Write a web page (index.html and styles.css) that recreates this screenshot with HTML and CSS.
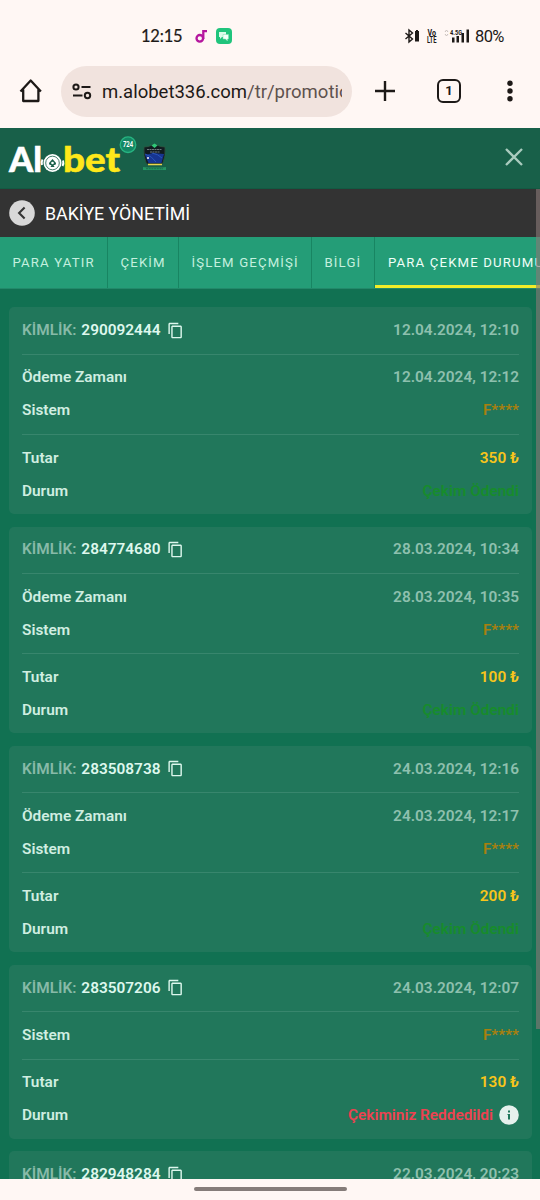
FILE: index.html
```html
<!DOCTYPE html>
<html lang="tr">
<head>
<meta charset="utf-8">
<title>Bakiye Yönetimi</title>
<link rel="stylesheet" href="styles.css">
</head>
<body>
<svg class="defs" width="0" height="0">
  <symbol id="copy" viewBox="0 0 24 24"><path d="M16 1H4C2.900 1 2 1.900 2 3v14h2V3h12V1zm3 4H8C6.900 5 6 5.900 6 7v14c0 1.100.9 2 2 2h11c1.100 0 2-.9 2-2V7c0-1.100-.9-2-2-2zm0 16H8V7h11v14z"/></symbol>
</svg>
<div class="screen">
  <div class="status">
    <span class="clock">12:15</span>
    <svg class="note" width="13" height="15" viewBox="0 0 13 15" fill="none" stroke="#b5179e" stroke-width="2.300"><circle cx="4.800" cy="9.300" r="3.300"/><path d="M8.300 10V2.200H12"/></svg>
    <svg class="chat" width="16" height="16" viewBox="0 0 16 16"><rect width="16" height="16" rx="4" fill="#20c47c"/><path d="M3 4h7v5H6l-2 2V9H3z" fill="#d9fbe9"/><path d="M7 6.500h5.500V11h-1v2l-2-2H7z" fill="#f4fff9" stroke="#7fdcb0" stroke-width=".5"/></svg>
    <span class="grow"></span>
    <svg class="bt" width="16" height="14" viewBox="0 0 16 14"><path d="M1.500 4l7 6-3.500 3V1l3.500 3-7 6" fill="none" stroke="#1d1917" stroke-width="1.400"/><path d="M11 2h1V1h2v1h1v10.500h-4z" fill="#1d1917"/></svg>
    <svg class="volte" width="10" height="15" viewBox="0 0 10 15"><text x="0.500" y="6.800" textLength="8.500" lengthAdjust="spacingAndGlyphs">Vo</text><text x="0" y="14" textLength="9.500" lengthAdjust="spacingAndGlyphs">LTE</text></svg>
    <svg class="signal" width="26" height="16" viewBox="0 0 26 16"><g fill="#1d1917"><rect x="8" y="9.500" width="2.500" height="5"/><rect x="12.500" y="8" width="2.500" height="6.500"/><rect x="17.500" y="5" width="2.500" height="9.500"/><rect x="22.500" y="1.500" width="2.500" height="13"/><text x="6" y="7" font-size="8" textLength="12" lengthAdjust="spacingAndGlyphs">4.5G</text></g><path d="M1 4l1.500-2L4 4M1 6l1.500 2L4 6" fill="none" stroke="#c8c0bc"/></svg>
    <span class="battery">80%</span>
  </div>
  <div class="browser">
    <svg class="home" width="24" height="24" viewBox="0 0 24 24" fill="none" stroke="#1d1917" stroke-width="2.300" stroke-linejoin="round"><path d="M1.500 12.500L11.700 1.500l10.200 11M4.200 10.500V22h15.200V10.500"/></svg>
    <div class="url">
      <svg width="20" height="17" viewBox="0 0 20 17" fill="none" stroke="#1d1917" stroke-width="2"><circle cx="4" cy="4" r="2.600"/><path d="M9.500 4H18.500M1 12.500h9.500"/><circle cx="15.500" cy="12.500" r="2.700"/></svg>
      <span class="address">m.alobet336.com<span class="path">/tr/promotions</span></span>
    </div>
    <svg class="plus" width="22" height="22" viewBox="0 0 22 22" stroke="#1d1917" stroke-width="2.400"><path d="M1 11h20M11 1v20"/></svg>
    <span class="tabcount">1</span>
    <svg class="more" width="6" height="22" viewBox="0 0 6 22" fill="#1d1917"><circle cx="3" cy="3.300" r="2.700"/><circle cx="3" cy="11" r="2.700"/><circle cx="3" cy="18.700" r="2.700"/></svg>
  </div>
  <header class="site">
    <svg class="logo" width="160" height="42" viewBox="0 0 160 42">
      <text class="word" x="0" y="37" fill="#fff" stroke="#fff" textLength="33" lengthAdjust="spacingAndGlyphs">Al</text>
      <text class="word" x="54" y="37" fill="#ffe81a" stroke="#ffe81a" textLength="57" lengthAdjust="spacingAndGlyphs">bet</text>
      <circle cx="43.500" cy="28" r="9" fill="#fff"/><circle cx="43.500" cy="28" r="6.800" fill="none" stroke="#186049" stroke-width=".8"/>
      <path d="M33 30q-1-3 .5-5.500M54 25.500q1 3-.5 5.500" stroke="#fff" stroke-width="2" fill="none"/>
      <path d="M43.500 24l3.500 4q.5 2.500-2.500 2l1 2h-4l1-2q-3 .5-2.500-2z" fill="#186049"/><circle cx="43.500" cy="28" r="1.300" fill="#fff"/>
      <circle cx="119" cy="9.700" r="7.800" fill="#148764" stroke="#27b582" stroke-width="1.300"/>
      <text class="badge" x="114" y="12" fill="#fff" textLength="10" lengthAdjust="spacingAndGlyphs">724</text>
      <path d="M135 12q5 0 8-2h5q3 2 8 2 1 9-2.500 17h-16Q134 21 135 12z" fill="#111b20" stroke="#315c42" stroke-width=".7"/>
      <path d="M136 20l8-2 11 1-2.500 9h-13z" fill="#173591"/><path d="M136 19q7 2 11 8M143 18q6 1 10 5" stroke="#2855b9" stroke-width="1" fill="none"/>
      <circle cx="139" cy="23" r="1" fill="#fff"/><path d="M142.500 10.500l3-2 3 2-3 2.500z" fill="#30c878"/>
      <path d="M138 14.500h15M141 17h10" stroke="#6d777c" stroke-width="1.200" stroke-dasharray="2 .5"/>
      <path d="M139 29.500h14" stroke="#e9d64e" stroke-width="1.500"/><path d="M134 32l4 .5h15l4-.5v3h-23z" fill="#249563"/><path d="M137 33.700h17" stroke="#176a48" stroke-width=".9" stroke-dasharray="2 .7"/>
    </svg>
    <svg class="close" width="18" height="18" viewBox="0 0 18 18" stroke="#a9cbbe" stroke-width="2.300"><path d="M1 1l16 16M17 1L1 17"/></svg>
  </header>
  <main class="panel">
    <div class="title">
      <svg width="26" height="26" viewBox="0 0 26 26"><circle cx="13" cy="13" r="12.800" fill="#d8d8d8"/><path d="M15.600 7.500L10.100 13l5.500 5.500" fill="none" stroke="#333" stroke-width="2.100"/></svg>
      <h1>BAKİYE YÖNETİMİ</h1>
    </div>
    <nav class="tabs">
      <span class="tab t1">PARA YATIR</span><span class="tab t2">ÇEKİM</span><span class="tab t3">İŞLEM GEÇMİŞİ</span><span class="tab t4">BİLGİ</span><span class="tab active">PARA ÇEKME DURUMU</span>
    </nav>
    <div class="list">
      <section class="card">
        <div class="group"><div class="row"><span class="muted">KİMLİK:</span><b>290092444</b><svg class="copy"><use href="#copy"/></svg><span class="date">12.04.2024, 12:10</span></div></div>
        <div class="group"><div class="row"><span>Ödeme Zamanı</span><span class="date">12.04.2024, 12:12</span></div><div class="row"><span>Sistem</span><span class="system">F****</span></div></div>
        <div class="group"><div class="row"><span>Tutar</span><span class="amount">350 ₺</span></div><div class="row"><span>Durum</span><span class="paid">Çekim Ödendi</span></div></div>
      </section>
      <section class="card">
        <div class="group"><div class="row"><span class="muted">KİMLİK:</span><b>284774680</b><svg class="copy"><use href="#copy"/></svg><span class="date">28.03.2024, 10:34</span></div></div>
        <div class="group"><div class="row"><span>Ödeme Zamanı</span><span class="date">28.03.2024, 10:35</span></div><div class="row"><span>Sistem</span><span class="system">F****</span></div></div>
        <div class="group"><div class="row"><span>Tutar</span><span class="amount">100 ₺</span></div><div class="row"><span>Durum</span><span class="paid">Çekim Ödendi</span></div></div>
      </section>
      <section class="card">
        <div class="group"><div class="row"><span class="muted">KİMLİK:</span><b>283508738</b><svg class="copy"><use href="#copy"/></svg><span class="date">24.03.2024, 12:16</span></div></div>
        <div class="group"><div class="row"><span>Ödeme Zamanı</span><span class="date">24.03.2024, 12:17</span></div><div class="row"><span>Sistem</span><span class="system">F****</span></div></div>
        <div class="group"><div class="row"><span>Tutar</span><span class="amount">200 ₺</span></div><div class="row"><span>Durum</span><span class="paid">Çekim Ödendi</span></div></div>
      </section>
      <section class="card">
        <div class="group"><div class="row"><span class="muted">KİMLİK:</span><b>283507206</b><svg class="copy"><use href="#copy"/></svg><span class="date">24.03.2024, 12:07</span></div></div>
        <div class="group"><div class="row"><span>Sistem</span><span class="system">F****</span></div></div>
        <div class="group"><div class="row"><span>Tutar</span><span class="amount">130 ₺</span></div><div class="row"><span>Durum</span><span class="rejected">Çekiminiz Reddedildi</span><svg class="info" width="20" height="20" viewBox="0 0 20 20"><circle cx="10" cy="10" r="9.800" fill="#e6f1ed"/><path d="M9 5.500h2v2H9zM8.500 9H11v5.500H9v-4.500h-.5z" fill="#21775b"/></svg></div></div>
      </section>
      <section class="card">
        <div class="group"><div class="row"><span class="muted">KİMLİK:</span><b>282948284</b><svg class="copy"><use href="#copy"/></svg><span class="date">22.03.2024, 20:23</span></div></div>
      </section>
    </div>
    <div class="scrollbar"></div>
  </main>
  <div class="gesture"><span></span></div>
</div>
</body>
</html>
```
FILE: styles.css
```css
* { box-sizing: border-box; }
body { margin: 0; font-family: Roboto, sans-serif; background: #fff7f4; }
.defs { position: absolute; }
.screen { width: 540px; height: 1200px; overflow: hidden; display: flex; flex-direction: column; }
svg { flex: none; display: block; overflow: visible; }

.status { height: 55px; flex: none; display: flex; align-items: center; padding: 17px 35px 0 141px; color: #1d1917; }
.clock { font-size: 16.500px; letter-spacing: -.2px; width: 54px; font-family: Lato, sans-serif; -webkit-text-stroke: .2px #1d1917; }
.note { margin-right: 8px; }
.grow { flex: 1; }
.volte { margin: 0 7px 0 7px; fill: #1d1917; font-size: 8.500px; font-weight: 700; }
.signal { margin-right: 5px; font-weight: 700; }
.battery { font-size: 16.500px; width: 30px; letter-spacing: -.6px; }

.browser { height: 73px; flex: none; display: flex; align-items: center; padding: 0 0 1px 19px; color: #1d1917; }
.url { width: 291px; height: 51px; margin-left: 18px; border-radius: 26px; background: #f1e3de; display: flex; align-items: center; padding: 0 10px 0 11px; }
.address { flex: 1; margin-left: 10px; font-size: 18.500px; letter-spacing: 0; white-space: nowrap; overflow: hidden; line-height: 26px; padding-top: 2px; }
.path { color: #5e524e; }
.plus { margin-left: 22px; }
.tabcount { width: 24px; height: 24px; margin-left: 41px; border: 2.500px solid #1d1917; border-radius: 6px; font-size: 13px; font-weight: 700; line-height: 20px; text-align: center; }
.more { margin-left: 46px; }

.site { height: 61px; flex: none; background: #186049; display: flex; justify-content: space-between; padding: 7px 17px 0 9px; border-bottom: 1px solid #135a42; }
.word { font-family: Lato, sans-serif; font-weight: 900; font-size: 34.500px; stroke-width: .5; }
.badge { font-family: Lato, sans-serif; font-weight: 900; font-size: 6.500px; }
.close { margin-top: 13px; }
.panel { position: relative; flex: 1; min-height: 0; overflow: hidden; background: #117152; }
.title { height: 48px; background: #333; display: flex; align-items: center; padding-left: 9px; gap: 10px; }
.title h1 { margin: 0; color: #fff; font-size: 17.800px; font-weight: 400; }
.tabs { height: 52px; display: flex; background: #249d77; border-bottom: 1px solid #22896a; overflow: hidden; }
.tab { flex: none; height: 52px; line-height: 51px; padding-left: 12.500px; border-right: 1px solid #188562; font-size: 13.200px; letter-spacing: 1.150px; color: #c5f0df; white-space: nowrap; }
.t1 { width: 108px; }
.t2 { width: 71px; }
.t3 { width: 133px; }
.t4 { width: 63px; }
.active { width: 180px; height: 51px; padding-left: 13px; color: #f0fff8; border-right: 0; border-bottom: 3px solid #f1ed29; }

.list { padding: 18.400px 8px 0 9px; display: flex; flex-direction: column; gap: 12.700px; }
.card { flex: none; background: #21775b; border-radius: 5px; padding: 0 13px; }
.group { padding: 6.300px 0 6.900px; }
.group + .group { border-top: 1px solid #38866d; }
.row { height: 33px; display: flex; align-items: center; color: #d0eee1; font-size: 15.400px; font-weight: 600; white-space: nowrap; }
.row b { margin-left: 5px; color: #ddf7ed; font-weight: 600; }
.row > :last-child { margin-left: auto; }
.muted { color: #88baa8; }
.copy { width: 17px; height: 17px; margin-left: 7px; fill: #ddf7ed; }
.date { color: #8ec0ae; }
.system { color: #a8800e; }
.amount { color: #f8c51b; }
.paid { color: #178c2b; }
.rejected { color: #ed4250; margin-left: auto; }
.row > .info { margin-left: 6px; }
.scrollbar { position: absolute; top: 0; right: 0; width: 4px; height: 840px; background: rgba(135, 120, 118, .62); }
.gesture { height: 21px; flex: none; display: flex; justify-content: center; padding-top: 8px; background: #fff7f4; }
.gesture span { width: 153px; height: 4px; border-radius: 2px; background: #857c79; }
```
